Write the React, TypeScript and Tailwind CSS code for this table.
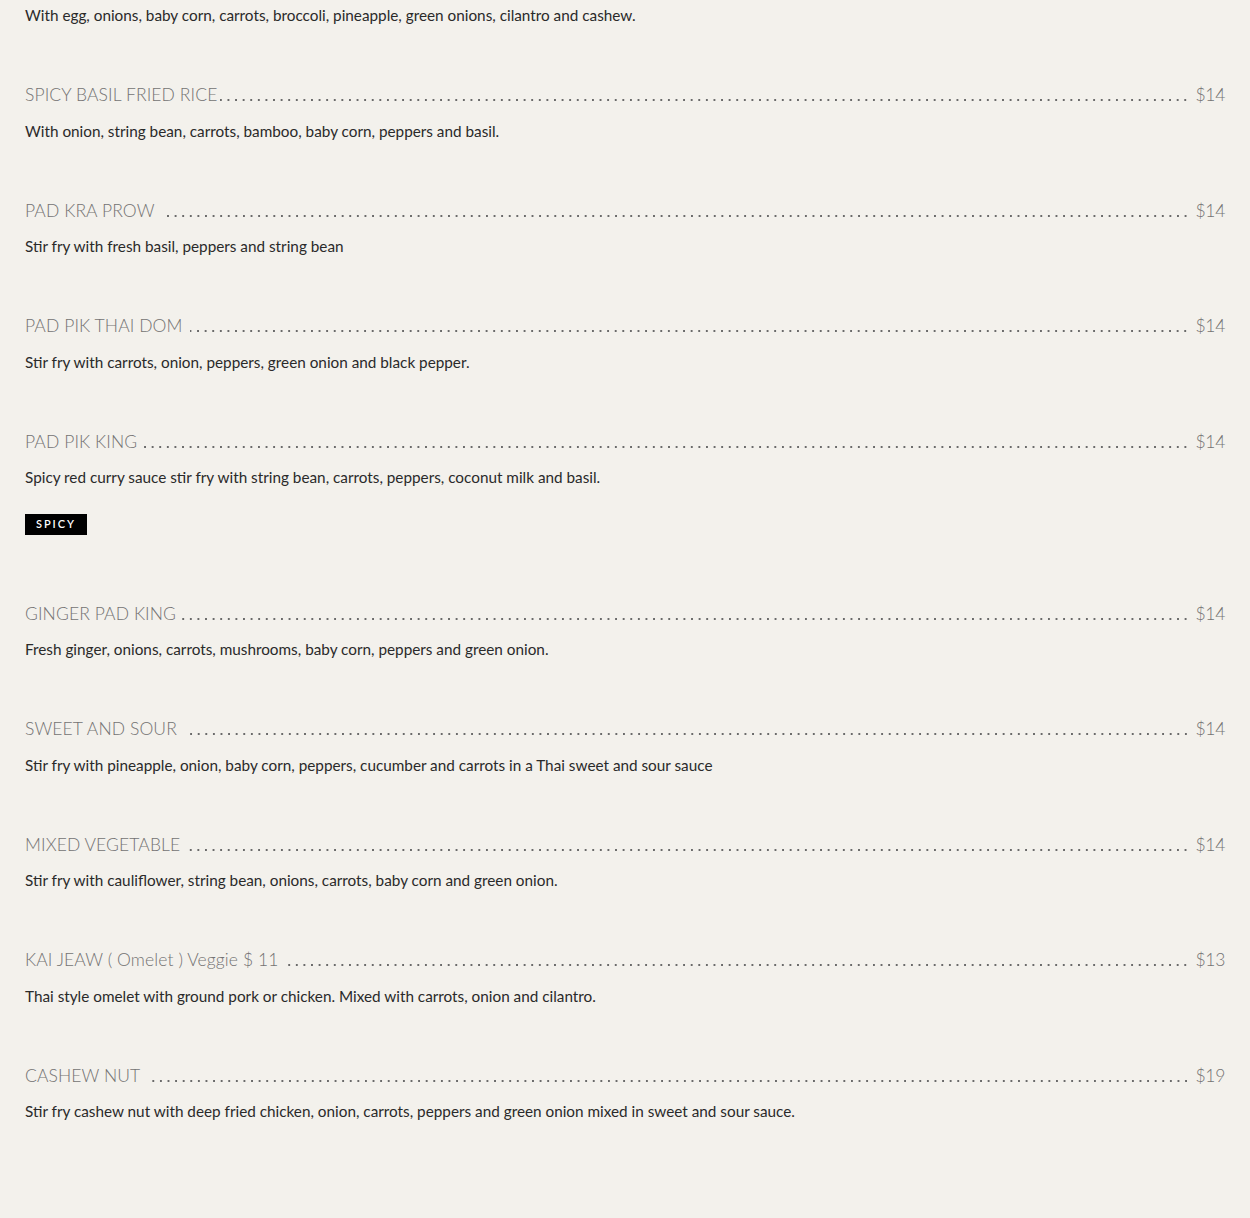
import React from "react";

type Item = { name: string; price: string; desc: string; spicy?: boolean };

const items: Item[] = [
  { name: "SPICY BASIL FRIED RICE", price: "$14", desc: "With onion, string bean, carrots, bamboo, baby corn, peppers and basil." },
  { name: "PAD KRA PROW ", price: "$14", desc: "Stir fry with fresh basil, peppers and string bean" },
  { name: "PAD PIK THAI DOM ", price: "$14", desc: "Stir fry with carrots, onion, peppers, green onion and black pepper." },
  { name: "PAD PIK KING", price: "$14", desc: "Spicy red curry sauce stir fry with string bean, carrots, peppers, coconut milk and basil.", spicy: true },
  { name: "GINGER PAD KING", price: "$14", desc: "Fresh ginger, onions, carrots, mushrooms, baby corn, peppers and green onion." },
  { name: "SWEET AND SOUR ", price: "$14", desc: "Stir fry with pineapple, onion, baby corn, peppers, cucumber and carrots in a Thai sweet and sour sauce" },
  { name: "MIXED VEGETABLE ", price: "$14", desc: "Stir fry with cauliflower, string bean, onions, carrots, baby corn and green onion." },
  { name: "KAI JEAW ( Omelet ) Veggie $ 11 ", price: "$13", desc: "Thai style omelet with ground pork or chicken. Mixed with carrots, onion and cilantro." },
  { name: "CASHEW NUT ", price: "$19", desc: "Stir fry cashew nut with deep fried chicken, onion, carrots, peppers and green onion mixed in sweet and sour sauce." },
];

function MenuItem({ item }: { item: Item }) {
  return (
    <div className="pt-[57px]">
      <div className="flex items-center h-6 leading-6 text-[17.5px] tracking-[0.1px] font-light text-[#737373]">
        <span className="whitespace-pre shrink-0 pr-[3px]">{item.name}</span>
        <span className="flex-1 h-6 mr-[6px] bg-[radial-gradient(circle,#6a6a6a_0.8px,transparent_1.2px)] bg-[length:7.6px_4px] bg-repeat-x bg-[position:right_0_bottom_5px]" />
        <span className="shrink-0 tracking-[-0.3px]">{item.price}</span>
      </div>
      <p className="mt-[12.5px] h-[22px] leading-[22px] text-[15.3px] text-[#2a2a2a]">{item.desc}</p>
      {item.spicy && (
        <div className="mt-[26px] mb-[9.5px] w-[62px] h-[21px] bg-black text-white text-[11px] font-semibold tracking-[2px] flex items-center justify-center">
          SPICY
        </div>
      )}
    </div>
  );
}

export default function App() {
  return (
    <div className="min-h-[1218px] bg-[#f3f1ec] px-[25px] pt-[4px] font-['Lato',sans-serif]">
      <p className="h-[22px] leading-[22px] text-[15.3px] text-[#2a2a2a]">
        With egg, onions, baby corn, carrots, broccoli, pineapple, green onions, cilantro and cashew.
      </p>
      {items.map((it) => (
        <MenuItem key={it.name} item={it} />
      ))}
    </div>
  );
}
